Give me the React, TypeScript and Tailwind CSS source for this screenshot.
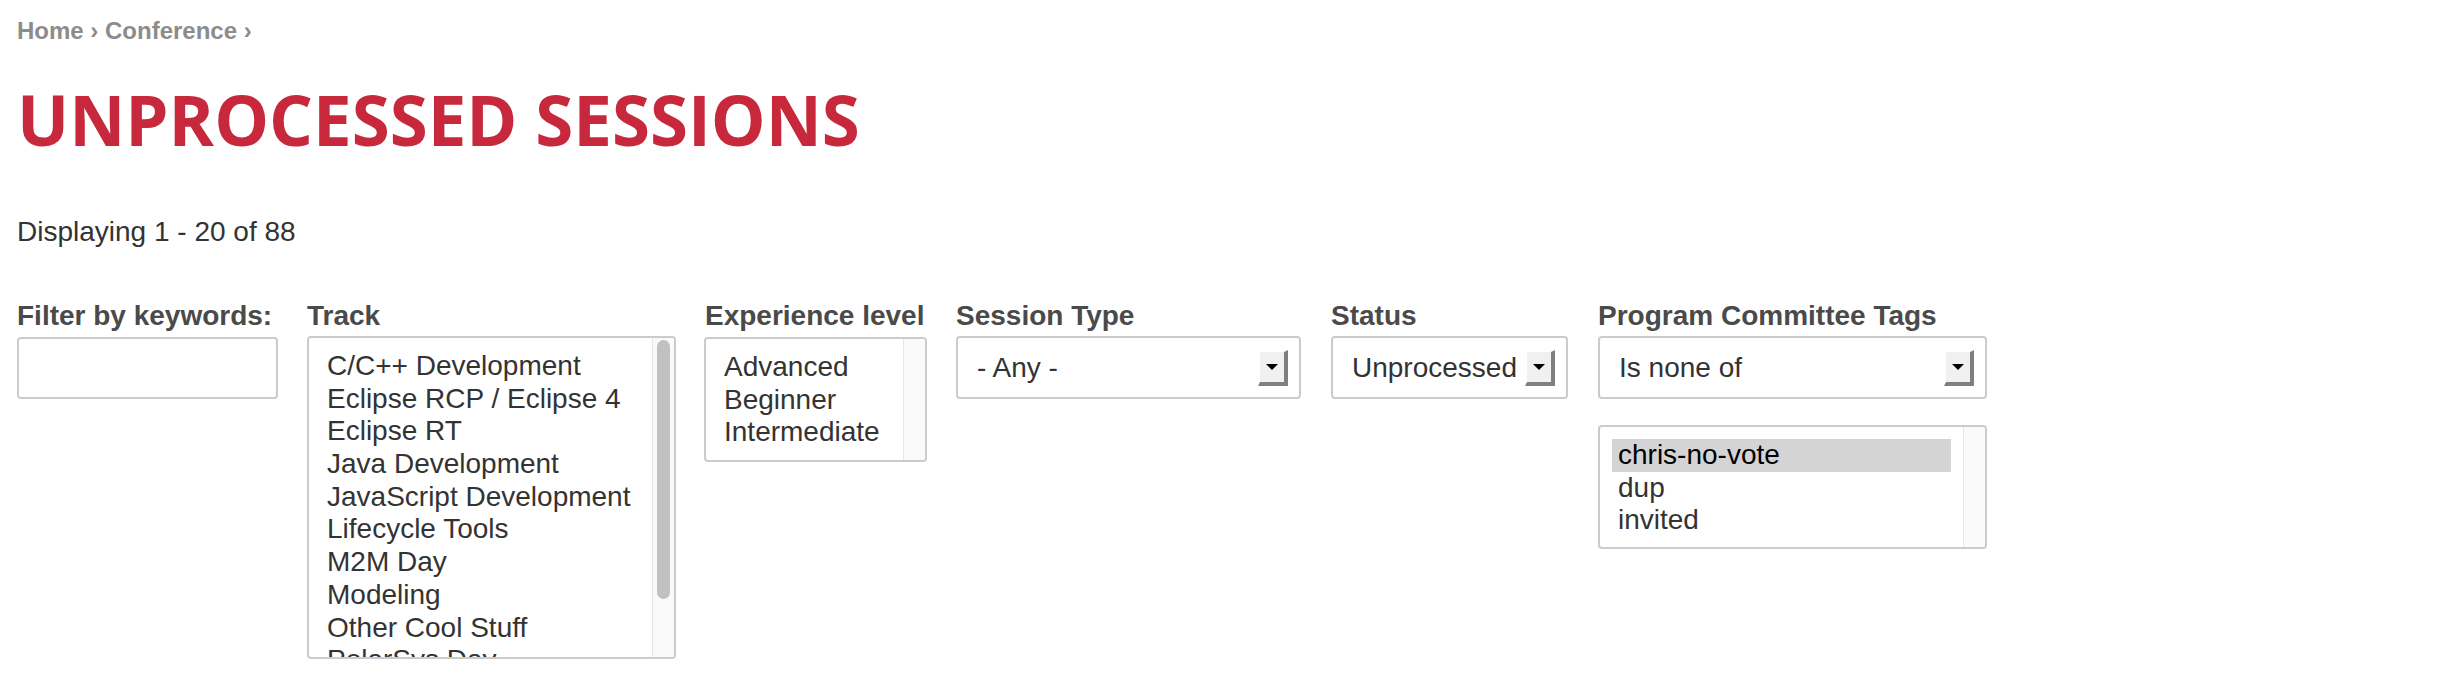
import React from "react";

const trackItems = [
  "C/C++ Development",
  "Eclipse RCP / Eclipse 4",
  "Eclipse RT",
  "Java Development",
  "JavaScript Development",
  "Lifecycle Tools",
  "M2M Day",
  "Modeling",
  "Other Cool Stuff",
  "PolarSys Day",
  "Science",
  "Web & Cloud",
];

function Arrow() {
  return (
    <div className="w-[30px] h-[36px] shrink-0 bg-[#f0f0f0] border-solid border-t-[2px] border-l-[2px] border-r-[4px] border-b-[4px] border-t-white border-l-white border-r-[#7f7f7f] border-b-[#7f7f7f] flex items-center justify-center">
      <svg width="12" height="6" viewBox="0 0 12 6">
        <polygon points="0,0 12,0 6,6" fill="#000" />
      </svg>
    </div>
  );
}

function Select({ value }: { value: string }) {
  return (
    <div className="mt-[4px] h-[63px] w-full border-2 border-[#cbcbcb] rounded-[4px] bg-white flex items-center justify-between pl-[19px] pr-[11px]">
      <span className="text-[28px] leading-[32px] text-[#333333] whitespace-nowrap">{value}</span>
      <Arrow />
    </div>
  );
}

function ListBox({
  items,
  height,
  thumb,
  selected,
  className = "",
}: {
  items: string[];
  height: string;
  thumb?: boolean;
  selected?: number;
  className?: string;
}) {
  return (
    <div className={`${height} ${className} w-full border-2 border-[#cbcbcb] rounded-[4px] bg-white flex overflow-hidden`}>
      <div className="flex-1 pt-[12px] pl-[12px] pr-[12px] overflow-hidden">
        {items.map((it, i) => (
          <div
            key={it}
            className={`px-[6px] h-[32.7px] leading-[32.7px] text-[28px] whitespace-nowrap ${
              selected === i ? "bg-[#d4d4d4] text-black" : "text-[#333333]"
            }`}
          >
            {it}
          </div>
        ))}
      </div>
      <div className="w-[22px] shrink-0 bg-[#fafafa] border-l border-[#e6e6e6] pt-[2px] pl-[4px]">
        {thumb && <div className="w-[13px] h-[259px] rounded-full bg-[#c1c1c1]" />}
      </div>
    </div>
  );
}

function Label({ children }: { children: React.ReactNode }) {
  return (
    <div className="text-[28px] leading-[32px] font-bold text-[#4a4a4a] whitespace-nowrap">{children}</div>
  );
}

export default function App() {
  return (
    <div
      className="w-[2446px] h-[698px] overflow-hidden bg-white pl-[17px]"
      style={{ fontFamily: '"Liberation Sans", Arial, sans-serif' }}
    >
      <div className="pt-[17px] text-[24px] leading-[28px] font-bold text-[#8c8c8c]">
        Home › Conference ›
      </div>
      <h1
        className="mt-[34px] text-[69px] leading-[80px] font-bold text-[#c8283b]"
        style={{ fontFamily: '"Open Sans", sans-serif' }}
      >
        UNPROCESSED SESSIONS
      </h1>
      <div className="mt-[57px] text-[28px] leading-[32px] text-[#333333]">Displaying 1 - 20 of 88</div>

      <div className="mt-[52px] flex items-start">
        <div className="w-[261px] flex flex-col">
          <Label>Filter by keywords:</Label>
          <div className="mt-[5px] h-[62px] w-full border-2 border-[#cbcbcb] rounded-[4px] bg-white" />
        </div>
        <div className="ml-[29px] w-[369px] flex flex-col">
          <Label>Track</Label>
          <ListBox items={trackItems} height="h-[323px]" thumb className="mt-[4px]" />
        </div>
        <div className="ml-[28px] w-[223px] flex flex-col">
          <div className="pl-[1px]">
            <Label>Experience level</Label>
          </div>
          <ListBox items={["Advanced", "Beginner", "Intermediate"]} height="h-[125px]" className="mt-[5px]" />
        </div>
        <div className="ml-[29px] w-[345px] flex flex-col">
          <Label>Session Type</Label>
          <Select value="- Any -" />
        </div>
        <div className="ml-[30px] w-[237px] flex flex-col">
          <Label>Status</Label>
          <Select value="Unprocessed" />
        </div>
        <div className="ml-[30px] w-[389px] flex flex-col">
          <Label>Program Committee Tags</Label>
          <Select value="Is none of" />
          <ListBox
            items={["chris-no-vote", "dup", "invited"]}
            height="h-[124px]"
            selected={0}
            className="mt-[26px]"
          />
        </div>
      </div>
    </div>
  );
}
